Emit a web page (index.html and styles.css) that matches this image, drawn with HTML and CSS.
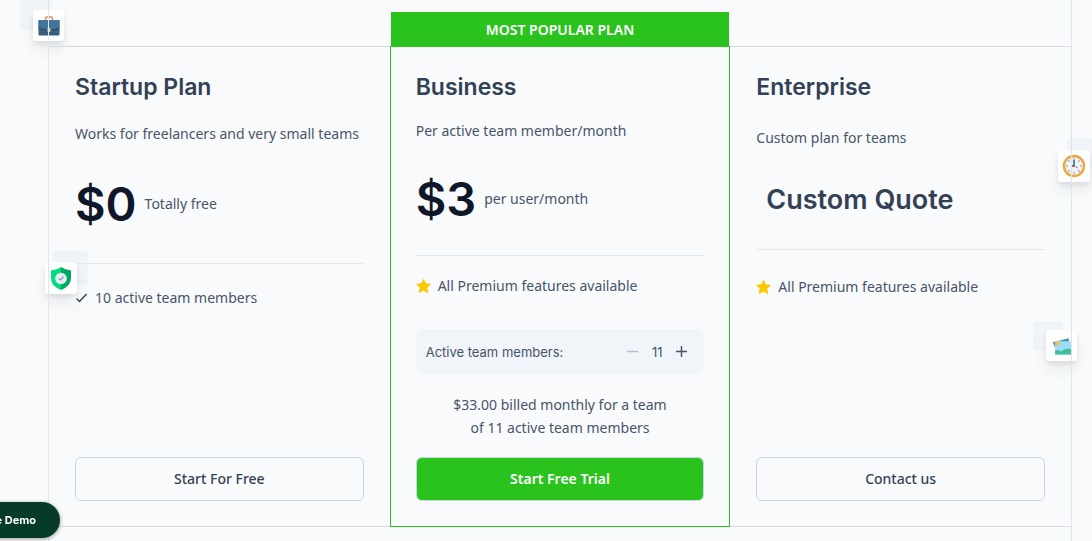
FILE: index.html
```html
<!DOCTYPE html>
<html lang="en">
<head>
    <meta charset="UTF-8">
    <meta name="viewport" content="width=device-width, initial-scale=1.0">
    <title>Pricing</title>
    <link rel="stylesheet" href="styles.css">
</head>
<body>
    <!-- floating decorations, behind the frame lines -->
    <div class="floater floater-case">
        <span class="floater-back"></span>
        <span class="floater-tile">
            <svg width="22" height="20" viewBox="0 0 22 20">
                <path d="M7.500 4V2.500Q7.500 1 9 1h4q1.500 0 1.500 1.500V4" fill="none" stroke="#e58a68" stroke-width="1.500"/>
                <rect x="0.500" y="4" width="21" height="15.500" rx="1" fill="#365e7d"/>
                <path d="M.5 5q0-1 1-1h19q1 0 1 1v7q-10.500 4-21 0z" fill="#43749a"/>
                <path d="M.5 12q10.500 4 21 0" fill="none" stroke="#2b4d69"/>
                <rect x="9.500" y="12" width="3" height="4" rx="1" fill="#f0d58a"/>
            </svg>
        </span>
    </div>
    <div class="floater floater-shield">
        <span class="floater-back"></span>
        <span class="floater-tile">
            <svg width="20" height="23" viewBox="0 0 20 23">
                <path d="M10 0Q6 3 0 3.500V11q0 8 10 12z" fill="#00dc82"/>
                <path d="M10 0q4 3 10 3.500V11q0 8-10 12z" fill="#00a862"/>
                <circle cx="10" cy="11.500" r="5.800" fill="#e4eef4"/>
                <path d="M7.500 11.500l2 1.500 3-3.500" fill="none" stroke="#76a3ad" stroke-width="1.200"/>
            </svg>
        </span>
    </div>
    <div class="floater floater-clock">
        <span class="floater-back"></span>
        <span class="floater-tile">
            <svg width="24" height="24" viewBox="0 0 24 24">
                <circle cx="12" cy="12" r="10" fill="#edf5f9" stroke="#eba844" stroke-width="2.500"/>
                <g fill="#54708a">
                    <circle cx="12" cy="5" r=".7"/>
                    <circle cx="12" cy="19" r=".7"/>
                    <circle cx="5" cy="12" r=".7"/>
                    <circle cx="19" cy="12" r=".7"/>
                    <circle cx="7" cy="7" r=".7"/>
                    <circle cx="17" cy="7" r=".7"/>
                    <circle cx="7" cy="17" r=".7"/>
                    <circle cx="17" cy="17" r=".7"/>
                </g>
                <path d="M12 6V12H10" fill="none" stroke="#3c5874" stroke-width="1.500"/>
                <path d="M12 12l4 2" stroke="#e36b70"/>
            </svg>
        </span>
    </div>
    <div class="floater floater-photo">
        <span class="floater-back"></span>
        <span class="floater-tile">
            <svg width="20" height="18" viewBox="0 0 20 18">
                <path d="M0 4.500L17 .5l1.500 6L3.500 14z" fill="#dceaf0"/>
                <path d="M1 5.500l15.500-4 .5 3H3L3 10z" fill="#2f8fb5"/>
                <rect x="3" y="4.500" width="17" height="13" fill="#a0dcf5"/>
                <path d="M3 4.500h5q0 4-5 4.500z" fill="#f3c050"/>
                <path d="M3 14q3-1.500 6 .5 4-4 11-2v5H3z" fill="#3fbd9d"/>
            </svg>
        </span>
    </div>

    <main class="frame">
        <div class="plans">
            <section class="plan plan-startup">
                <h2>Startup Plan</h2>
                <p class="desc">Works for freelancers and very small teams</p>
                <div class="price"><strong>$0</strong><span>Totally free</span></div>
                <ul class="features">
                    <li>
                        <svg width="13" height="14" viewBox="0 0 13 14"><path d="M1.500 7.500l3 3 7-7.500" fill="none" stroke="#334155" stroke-width="1.400"/></svg>
                        10 active team members
                    </li>
                </ul>
                <a class="btn" href="#">Start For Free</a>
            </section>

            <section class="plan plan-business">
                <div class="badge">MOST POPULAR PLAN</div>
                <h2>Business</h2>
                <p class="desc">Per active team member/month</p>
                <div class="price"><strong>$3</strong><span>per user/month</span></div>
                <ul class="features">
                    <li>
                        <svg width="15" height="14" viewBox="0 0 15 14"><path d="M7.500 .5l2 4.300 4.800.5-3.500 3.300.9 4.900-4.200-2.400-4.200 2.400.9-4.900L.7 5.300l4.800-.5z" fill="#fcc800" stroke="#fcc800" stroke-linejoin="round"/></svg>
                        All Premium features available
                    </li>
                </ul>
                <div class="counter">
                    <span class="counter-label">Active team members:</span>
                    <button type="button" id="minus" aria-label="Remove member" disabled>
                        <svg width="11" height="11" viewBox="0 0 11 11"><path d="M0 5.500h11" stroke="currentColor" stroke-width="1.500"/></svg>
                    </button>
                    <output id="count">11</output>
                    <button type="button" id="plus" aria-label="Add member">
                        <svg width="11" height="11" viewBox="0 0 11 11"><path d="M0 5.500h11M5.500 0v11" stroke="currentColor" stroke-width="1.500"/></svg>
                    </button>
                </div>
                <p class="billed">$33.00 billed monthly for a team<br>of 11 active team members</p>
                <a class="btn btn-primary" href="#">Start Free Trial</a>
            </section>

            <section class="plan plan-enterprise">
                <h2>Enterprise</h2>
                <p class="desc">Custom plan for teams</p>
                <div class="price quote">Custom Quote</div>
                <ul class="features">
                    <li>
                        <svg width="15" height="14" viewBox="0 0 15 14"><path d="M7.500 .5l2 4.300 4.800.5-3.500 3.300.9 4.900-4.200-2.400-4.200 2.400.9-4.900L.7 5.300l4.800-.5z" fill="#fcc800" stroke="#fcc800" stroke-linejoin="round"/></svg>
                        All Premium features available
                    </li>
                </ul>
                <a class="btn" href="#">Contact us</a>
            </section>
        </div>
    </main>

    <button type="button" class="demo">Free Demo</button>
</body>
</html>
```
FILE: styles.css
```css
* {
    box-sizing: border-box;
}
body {
    margin: 0;
    background: #f9fafc;
    color: #475569;
    font-family: "Noto Sans", sans-serif;
    font-size: 14px;
    line-height: 24px;
}
h2, p, ul {
    margin: 0;
    padding: 0;
}
.frame {
    position: relative;
    z-index: 1;
    min-height: 100vh;
    margin: 0 20px 0 48px;
    padding-top: 46px;
    border-left: 1px solid #dfe6f0;
    border-right: 1px solid #dfe3ec;
}
.plans {
    display: grid;
    grid-template-columns: repeat(3, 1fr);
}
.plan {
    position: relative;
    display: flex;
    flex-direction: column;
    padding: 24px 26px 25px;
    border-top: 1px solid #d8dbdf;
    border-bottom: 1px solid #d8dbdf;
}
.plan h2 {
    color: #334155;
    font-family: Inter, sans-serif;
    font-size: 23px;
    font-weight: 600;
    line-height: 32px;
}
.price {
    display: flex;
    align-items: center;
    gap: 8px;
    height: 60px;
}
.price strong {
    color: #0f172a;
    font-family: Inter, sans-serif;
    font-size: 47px;
    font-weight: 600;
    line-height: 60px;
}
.quote {
    padding-left: 10px;
    color: #334155;
    font-family: Inter, sans-serif;
    font-size: 27px;
    font-weight: 600;
}
.features {
    list-style: none;
    border-top: 1px solid #e2e8f0;
}
.features li {
    display: flex;
    align-items: center;
    gap: 7px;
}

/* startup */
.plan-startup .desc {
    margin: 19px 0 28px;
}
.plan-startup .features {
    margin-top: 29px;
    padding-top: 22px;
}

/* business */
.plan-business {
    padding: 24px 25px 25px;
    border: 1px solid #2ac31d;
}
.plan-business .desc {
    margin: 16px 0 26px;
}
.plan-business .features {
    margin-top: 26px;
    padding-top: 18px;
}
.badge {
    position: absolute;
    left: 0;
    right: 0;
    bottom: 100%;
    height: 35px;
    background: #2ac31d;
    color: #fff;
    font-weight: 600;
    line-height: 35px;
    text-align: center;
}
.counter {
    display: flex;
    align-items: center;
    height: 45px;
    margin-top: 31px;
    padding: 0 12px 0 10px;
    border-radius: 6px;
    background: #f1f4f9;
    font-family: Inter, sans-serif;
    font-size: 13px;
}
.counter-label {
    margin-right: auto;
}
.counter button {
    display: flex;
    padding: 5px;
    border: none;
    background: none;
    color: #475569;
    cursor: pointer;
}
.counter button:disabled {
    color: #b6bdc8;
    cursor: default;
}
.counter output {
    width: 28px;
    text-align: center;
}
.billed {
    margin: 19px 0 18px;
    line-height: 23px;
    text-align: center;
}

/* enterprise */
.plan-enterprise .desc {
    margin: 23px 0 20px;
}
.plan-enterprise .features {
    margin-top: 19px;
    padding-top: 25px;
}

.btn {
    height: 44px;
    margin-top: auto;
    border: 1px solid #c8d6e3;
    border-radius: 6px;
    color: #334155;
    font-weight: 500;
    line-height: 42px;
    text-align: center;
    text-decoration: none;
}
.btn-primary {
    background: #2ac31d;
    color: #fff;
    font-weight: 600;
}

/* decorations */
.floater {
    position: absolute;
    width: 44px;
    height: 44px;
}
.floater-back,
.floater-tile {
    position: absolute;
    width: 32px;
    height: 32px;
    border-radius: 3px;
}
.floater-back {
    top: 0;
    left: 0;
    background: #f0f3f8;
}
.floater-tile {
    right: 0;
    bottom: 0;
    display: flex;
    align-items: center;
    justify-content: center;
    background: #fff;
    box-shadow: 0 10px 15px rgba(0, 0, 0, 0.06), 0 3px 5px rgba(0, 0, 0, 0.08);
}
.floater-case {
    top: -2px;
    left: 20px;
    height: 43px;
}
.floater-case .floater-tile,
.floater-photo .floater-tile {
    width: 31px;
    height: 31px;
}
.floater-shield {
    top: 251px;
    left: 45px;
    width: 43px;
    height: 43px;
}
.floater-shield .floater-back {
    left: auto;
    right: 0;
    width: 35px;
    height: 34px;
}
.floater-shield .floater-tile {
    right: auto;
    left: 0;
}
/* the tile stays inside the window, its back square is cut at the edge */
.floater-clock {
    top: 138px;
    right: 2px;
}
.floater-clock .floater-back {
    left: 21px;
    width: 25px;
}
.floater-photo {
    top: 321px;
    right: 15px;
    height: 40px;
}
.floater-photo .floater-back {
    width: 30px;
    height: 30px;
}

.demo {
    position: fixed;
    z-index: 2;
    right: calc(100% - 60px);
    bottom: 3px;
    height: 36px;
    padding: 0 24px;
    border: none;
    border-radius: 18px;
    background: #063b27;
    color: #fff;
    font-family: Inter, sans-serif;
    font-size: 11px;
    font-weight: 700;
    white-space: nowrap;
    box-shadow: 0 1px 4px rgba(0, 0, 0, 0.4);
}
```
